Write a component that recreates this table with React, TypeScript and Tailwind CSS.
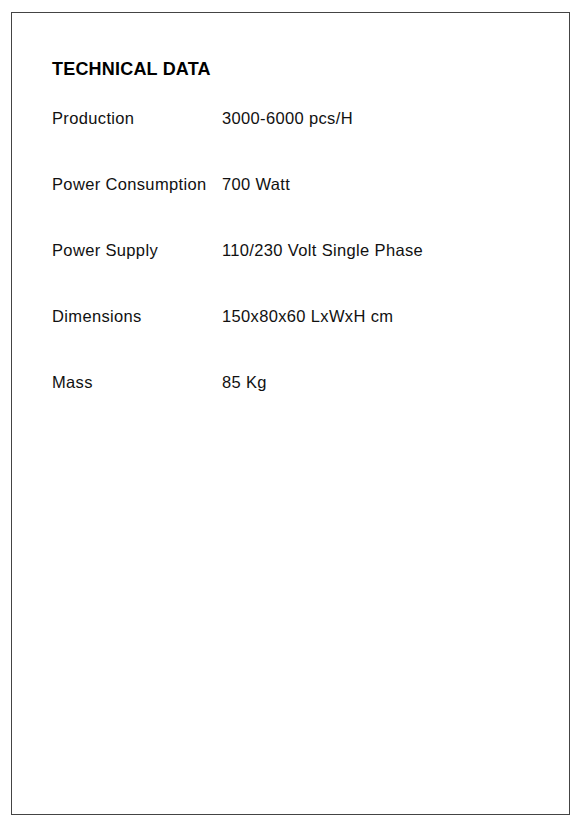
export default function App() {
  const rows: [string, string][] = [
    ["Production", "3000-6000 pcs/H"],
    ["Power Consumption", "700 Watt"],
    ["Power Supply", "110/230 Volt Single Phase"],
    ["Dimensions", "150x80x60 LxWxH cm"],
    ["Mass", "85 Kg"],
  ];
  return (
    <div className="w-[580px] h-[828px] bg-white pt-[12px] pl-[11px]" style={{ fontFamily: '"Liberation Sans", Arial, sans-serif' }}>
      <div className="w-[559px] h-[803px] border border-[#444] pl-[40px] pt-[45px] text-[#111]">
        <h1 className="text-[18px] font-bold leading-[22px] text-black tracking-[0.2px]">TECHNICAL DATA</h1>
        <div className="mt-[27px] flex flex-col gap-[44px]">
          {rows.map(([k, v]) => (
            <div key={k} className="flex text-[16.5px] leading-[22px] tracking-[0.35px]">
              <div className="w-[170px]">{k}</div>
              <div>{v}</div>
            </div>
          ))}
        </div>
      </div>
    </div>
  );
}
